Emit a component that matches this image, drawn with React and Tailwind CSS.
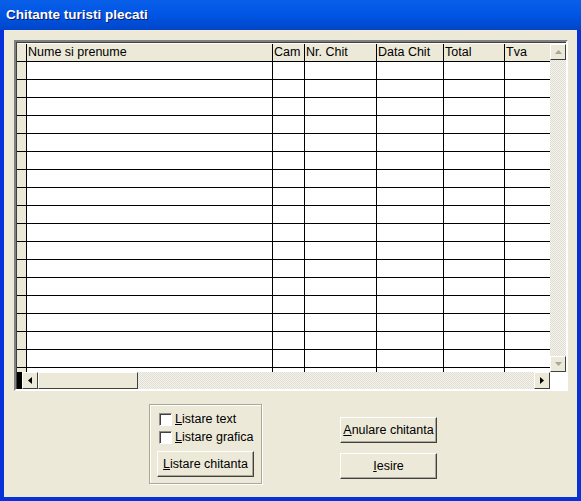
const cols = [
  { label: "Nume si prenume", w: 246 },
  { label: "Cam", w: 32 },
  { label: "Nr. Chit", w: 72 },
  { label: "Data Chit", w: 67 },
  { label: "Total", w: 61 },
  { label: "Tva", w: 47 },
];

const rows = Array.from({ length: 18 });

function Checkbox({ label }) {
  return (
    <label className="flex items-center gap-[3px] h-[18px]">
      <span className="w-[13px] h-[13px] bg-white border border-[#1c5180] border-t-[#8d8d8d] border-l-[#8d8d8d] border-b-white border-r-white shadow-[inset_1px_1px_0_#404040]" />
      <span><span className="underline">L</span>{label}</span>
    </label>
  );
}

function Button({ children, className = "" }) {
  return (
    <button className={`h-[26px] w-[97px] bg-[#ECE9D8] border border-t-white border-l-white border-r-[#404040] border-b-[#404040] shadow-[inset_-1px_-1px_0_#aca899] text-[12.5px] text-black ${className}`}>
      {children}
    </button>
  );
}

export default function App() {
  return (
    <div className="w-[581px] h-[501px] flex flex-col bg-[#0831d9] overflow-hidden" style={{ fontFamily: '"Liberation Sans", Arial, sans-serif' }}>
      {/* title bar */}
      <div className="h-[30px] flex items-center pl-[6px] bg-gradient-to-b from-[#0a5fe8] via-[#0055e5] to-[#0046c8]">
        <span className="text-white font-bold text-[13.5px] [text-shadow:1px_1px_0_#0a1b6a]">Chitante turisti plecati</span>
      </div>

      {/* body */}
      <div className="flex-1 mx-[4px] mb-[4px] bg-[#ECE9D8] flex flex-col pt-[10px] pl-[10px]">
        {/* grid */}
        <div className="w-[554px] h-[351px] border-2 border-t-[#808080] border-l-[#808080] border-b-white border-r-white flex flex-col text-[12.5px] text-black">
          <div className="flex flex-1 min-h-0 border border-[#404040] border-b-0 border-r-0 pt-[1px] bg-white">
            <div className="flex-1 min-h-0 overflow-hidden">
              {/* header */}
              <div className="flex h-[18px] bg-[#ECE9D8] border-b border-black">
                <div className="w-[10px] border-r border-black shrink-0" />
                {cols.map((c) => (
                  <div key={c.label} style={{ width: c.w }} className="shrink-0 border-r border-black pl-[1px] leading-[17px] whitespace-nowrap overflow-hidden">
                    {c.label}
                  </div>
                ))}
              </div>
              {rows.map((_, i) => (
                <div key={i} className="flex h-[18px] border-b border-black">
                  <div className="w-[10px] border-r border-black shrink-0 bg-[#ECE9D8]" />
                  {cols.map((c) => (
                    <div key={c.label} style={{ width: c.w }} className="shrink-0 border-r border-black" />
                  ))}
                </div>
              ))}
            </div>
            {/* vertical scrollbar */}
            <div className="w-[16px] shrink-0 flex flex-col bg-[repeating-conic-gradient(#f4f3ee_0_25%,#e0ded3_0_50%)] bg-[length:2px_2px]">
              <div className="h-[16px] bg-[#ECE9D8] border border-t-white border-l-white border-r-[#404040] border-b-[#404040] flex items-center justify-center">
                <svg width="7" height="4" viewBox="0 0 7 4"><path d="M3.5 0 L7 4 L0 4Z" fill="#a8a697" /></svg>
              </div>
              <div className="flex-1" />
              <div className="h-[16px] bg-[#ECE9D8] border border-t-white border-l-white border-r-[#404040] border-b-[#404040] flex items-center justify-center">
                <svg width="7" height="4" viewBox="0 0 7 4"><path d="M0 0 L7 0 L3.5 4Z" fill="#a8a697" /></svg>
              </div>
            </div>
          </div>
          {/* horizontal scrollbar */}
          <div className="h-[17px] flex shrink-0 border-l border-[#404040]">
            <div className="w-[5px] bg-black" />
            <div className="flex-1 flex bg-[repeating-conic-gradient(#f4f3ee_0_25%,#e0ded3_0_50%)] bg-[length:2px_2px]">
              <div className="w-[16px] h-[17px] bg-[#ECE9D8] border border-t-white border-l-white border-r-[#404040] border-b-[#404040] flex items-center justify-center">
                <svg width="4" height="7" viewBox="0 0 4 7"><path d="M0 3.5 L4 0 L4 7Z" fill="#000" /></svg>
              </div>
              <div className="w-[100px] h-[17px] bg-[#ECE9D8] border border-t-white border-l-white border-r-[#404040] border-b-[#404040]" />
              <div className="flex-1" />
              <div className="w-[16px] h-[17px] bg-[#ECE9D8] border border-t-white border-l-white border-r-[#404040] border-b-[#404040] flex items-center justify-center">
                <svg width="4" height="7" viewBox="0 0 4 7"><path d="M0 0 L4 3.5 L0 7Z" fill="#000" /></svg>
              </div>
            </div>
            <div className="w-[16px] bg-white" />
          </div>
        </div>

        {/* bottom controls */}
        <div className="flex mt-[13px] text-[12.5px] text-black">
          <div className="ml-[135px] w-[113px] h-[80px] border border-[#aca899] shadow-[inset_1px_1px_0_white,1px_1px_0_white] pl-[9px] pt-[5px] flex flex-col">
            <Checkbox label="istare text" />
            <Checkbox label="istare grafica" />
            <Button className="mt-[5px] ml-[-2px]"><span className="underline">L</span>istare chitanta</Button>
          </div>
          <div className="ml-[78px] flex flex-col pt-[13px] gap-[10px]">
            <Button><span className="underline">A</span>nulare chitanta</Button>
            <Button><span className="underline">I</span>esire</Button>
          </div>
        </div>
      </div>
    </div>
  );
}
